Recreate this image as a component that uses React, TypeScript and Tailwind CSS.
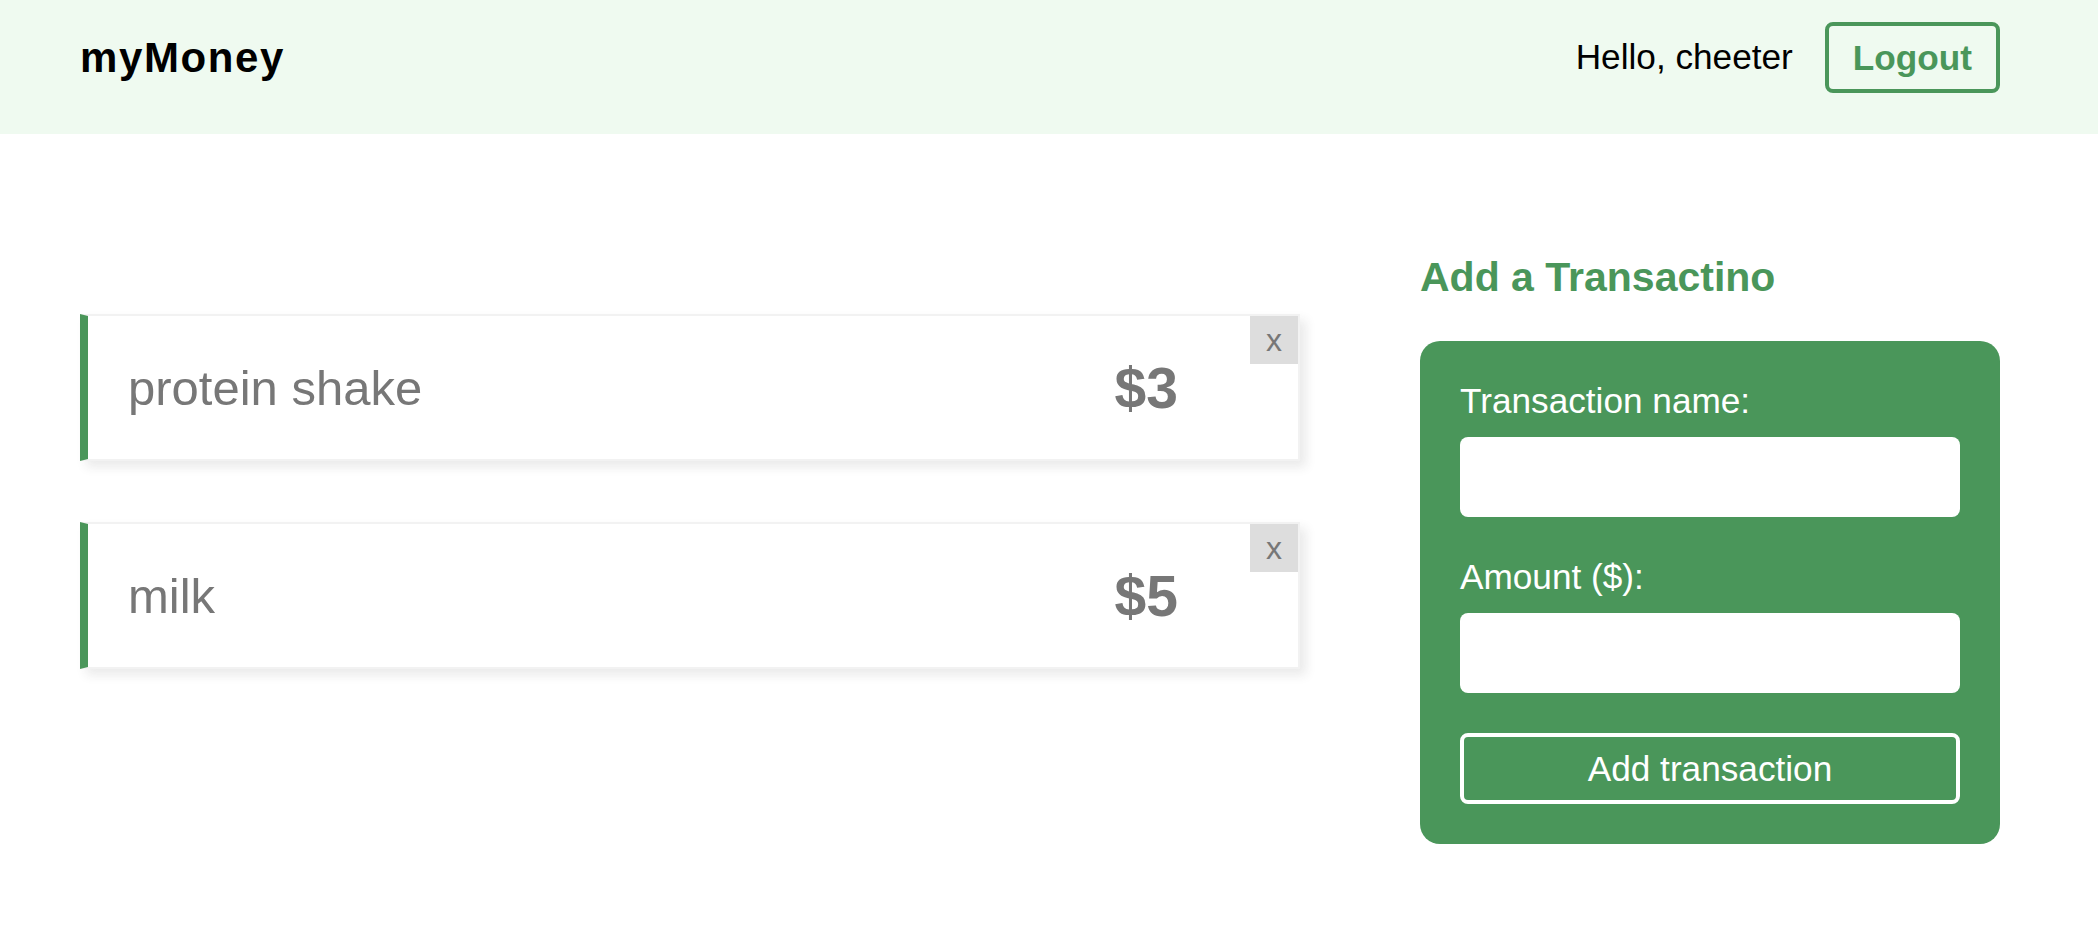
import { useState } from "react";

type Transaction = {
  id: string;
  name: string;
  amount: number;
};

function Navbar() {
  return (
    <nav className="w-full bg-[#effaf0] pt-[22px] pb-[41px]">
      <ul className="flex items-center ml-[80px] w-[1920px]">
        <li className="mr-auto text-[42px] font-bold tracking-[1.6px] text-black leading-[normal]">
          myMoney
        </li>
        <li className="text-black">Hello, cheeter</li>
        <li>
          <button className="ml-[32px] h-[71px] px-[24px] border-[4px] border-[#4a965a] rounded-[8px] text-[#4a965a] font-bold leading-[normal]">
            Logout
          </button>
        </li>
      </ul>
    </nav>
  );
}

function TransactionList({
  transactions,
  onDelete,
}: {
  transactions: Transaction[];
  onDelete: (id: string) => void;
}) {
  return (
    <ul className="flex flex-col gap-[61px] pt-[60px]">
      {transactions.map((t) => (
        <li
          key={t.id}
          className="relative flex items-center h-[147px] p-[40px] border-2 border-[#f2f2f2] border-l-[8px] border-l-[#4a965a] shadow-[6px_6px_10px_rgba(50,50,50,0.1)] overflow-hidden"
        >
          <p className="text-[49px] text-[#777] leading-[normal]">{t.name}</p>
          <p className="ml-auto mr-[80px] text-[57px] font-bold text-[#777] leading-[normal]">
            ${t.amount}
          </p>
          <button
            onClick={() => onDelete(t.id)}
            className="absolute top-0 right-0 w-[48px] h-[48px] flex items-center justify-center bg-[#ddd] text-[#777] text-[32px] leading-none"
          >
            x
          </button>
        </li>
      ))}
    </ul>
  );
}

function TransactionForm() {
  const [name, setName] = useState("");
  const [amount, setAmount] = useState("");

  return (
    <>
      <h3 className="text-[41px] font-bold text-[#4a965a] leading-[normal] mb-[40px]">
        Add a Transactino
      </h3>
      <form
        className="p-[40px] rounded-[20px] bg-[#4a965a]"
        onSubmit={(e) => e.preventDefault()}
      >
        <label className="block mb-[40px] text-white">
          <span className="block leading-[normal]">Transaction name:</span>
          <input
            type="text"
            value={name}
            onChange={(e) => setName(e.target.value)}
            className="block w-full h-[80px] mt-[16px] px-[20px] bg-white rounded-[8px] text-[#555] outline-none"
          />
        </label>
        <label className="block mb-[40px] text-white">
          <span className="block leading-[normal]">Amount ($):</span>
          <input
            type="number"
            value={amount}
            onChange={(e) => setAmount(e.target.value)}
            className="block w-full h-[80px] mt-[16px] px-[20px] bg-white rounded-[8px] text-[#555] outline-none"
          />
        </label>
        <button className="block w-full h-[71px] border-[4px] border-white rounded-[8px] text-white leading-[normal]">
          Add transaction
        </button>
      </form>
    </>
  );
}

export default function App() {
  const [transactions, setTransactions] = useState<Transaction[]>([
    { id: "1", name: "protein shake", amount: 3 },
    { id: "2", name: "milk", amount: 5 },
  ]);

  return (
    <div className="min-h-screen bg-white text-[35.2px] font-['Liberation_Sans',Arial,sans-serif]">
      <Navbar />
      <div className="grid grid-cols-[1280px_640px] ml-[80px] w-[1920px] mt-[120px]">
        <div className="pr-[60px]">
          <TransactionList
            transactions={transactions}
            onDelete={(id) => setTransactions((ts) => ts.filter((t) => t.id !== id))}
          />
        </div>
        <div className="pl-[60px]">
          <TransactionForm />
        </div>
      </div>
    </div>
  );
}
